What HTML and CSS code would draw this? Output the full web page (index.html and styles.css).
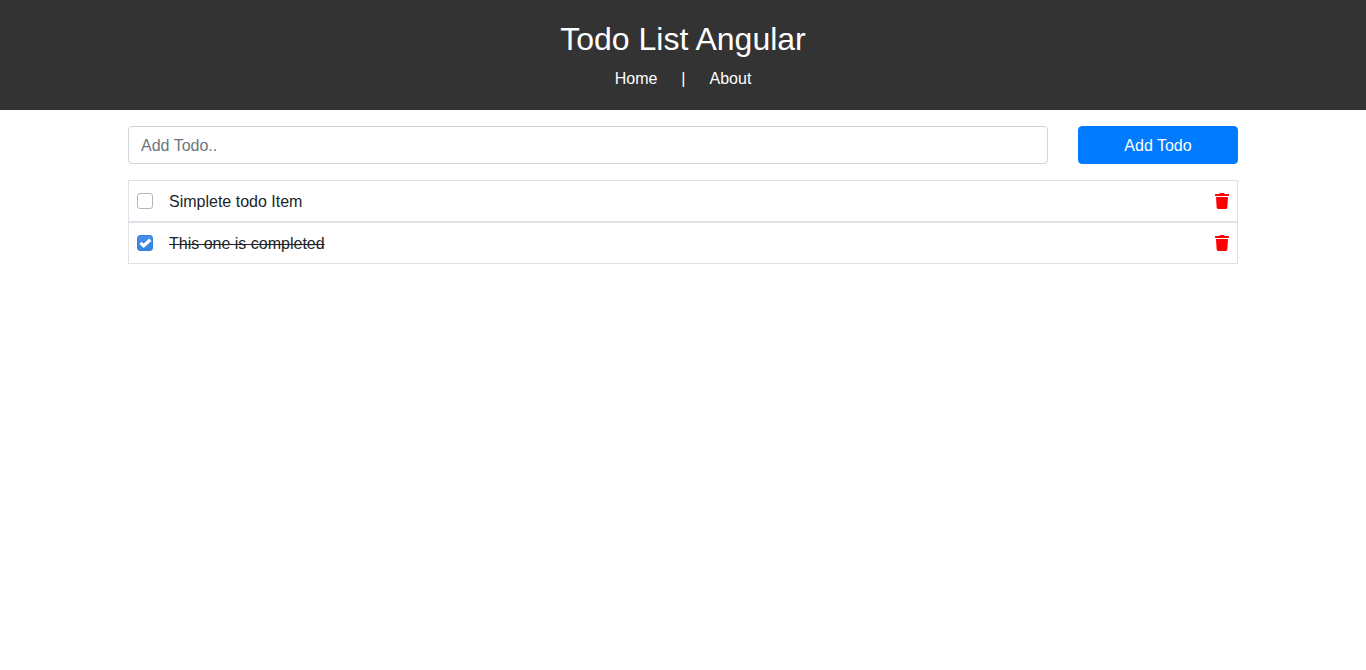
FILE: index.html
```html
<!DOCTYPE html>
<html lang="en">
<head>
  <meta charset="utf-8">
  <meta name="viewport" content="width=device-width, initial-scale=1">
  <title>Todo List Angular</title>
  <link rel="stylesheet" href="styles.css">
</head>
<body>
  <header class="header">
    <h1 class="header-title">Todo List Angular</h1>
    <nav class="header-nav">
      <a class="header-link" href="#home">Home</a>
      <span>|</span>
      <a class="header-link" href="#about">About</a>
    </nav>
  </header>
  <main class="container">
    <form class="add-form">
      <input class="add-input" type="text" name="title" placeholder="Add Todo.." aria-label="Add Todo">
      <button class="add-button" type="submit">Add Todo</button>
    </form>
    <ul class="todo-list">
      <li class="todo">
        <input class="todo-check" type="checkbox" id="todo-1">
        <label class="todo-label" for="todo-1">Simplete todo Item</label>
        <button class="todo-delete" type="button" aria-label="Delete Simplete todo Item">
          <svg class="trash" viewBox="0 0 448 512" aria-hidden="true"><path d="M432 32H312l-9.4-18.7A24 24 0 0 0 281.1 0H166.8a23.72 23.72 0 0 0-21.4 13.3L136 32H16A16 16 0 0 0 0 48v32a16 16 0 0 0 16 16h416a16 16 0 0 0 16-16V48a16 16 0 0 0-16-16zM53.2 467a48 48 0 0 0 47.9 45h245.8a48 48 0 0 0 47.9-45L416 128H32z"/></svg>
        </button>
      </li>
      <li class="todo todo-done">
        <input class="todo-check" type="checkbox" id="todo-2" checked>
        <label class="todo-label" for="todo-2">This one is completed</label>
        <button class="todo-delete" type="button" aria-label="Delete This one is completed">
          <svg class="trash" viewBox="0 0 448 512" aria-hidden="true"><path d="M432 32H312l-9.4-18.7A24 24 0 0 0 281.1 0H166.8a23.72 23.72 0 0 0-21.4 13.3L136 32H16A16 16 0 0 0 0 48v32a16 16 0 0 0 16 16h416a16 16 0 0 0 16-16V48a16 16 0 0 0-16-16zM53.2 467a48 48 0 0 0 47.9 45h245.8a48 48 0 0 0 47.9-45L416 128H32z"/></svg>
        </button>
      </li>
    </ul>
  </main>
</body>
</html>
```
FILE: styles.css
```css
*,
*::before,
*::after {
  box-sizing: border-box;
}

body {
  margin: 0;
  background: #fff;
  color: #212529;
  font-family: "Liberation Sans", Arial, sans-serif;
  font-size: 16px;
  line-height: 24px;
}

.header {
  padding: 20px 20px 18px;
  background: #333;
  color: #fff;
  text-align: center;
}

.header-title {
  margin: 0 0 8px;
  font-size: 32px;
  font-weight: 400;
  line-height: 38px;
}

.header-nav {
  display: flex;
  justify-content: center;
  gap: 24px;
  line-height: 26px;
}

.header-link {
  color: #fff;
  text-decoration: none;
}

.container {
  max-width: 1140px;
  margin: 0 auto;
  padding: 16px 15px;
}

.add-form {
  display: flex;
  gap: 30px;
  margin-bottom: 16px;
}

.add-input,
.add-button {
  height: 38px;
  padding: 7px 12px 5px;
  border: 1px solid #ced4da;
  border-radius: 4px;
  font: inherit;
}

.add-input {
  flex: 1;
  min-width: 0;
  background: #fff;
  color: #495057;
}

.add-input::placeholder {
  color: #6c757d;
  opacity: 1;
}

.add-button {
  flex: 0 0 160px;
  border-color: #007bff;
  background: #007bff;
  color: #fff;
  cursor: pointer;
}

.todo-list {
  margin: 0;
  padding: 0;
  list-style: none;
}

.todo {
  display: flex;
  align-items: center;
  padding: 8px;
  border: 1px solid #dee2e6;
}

.todo-check {
  appearance: none;
  width: 16px;
  height: 16px;
  margin: 0 16px 0 0;
  border: 1px solid #bdb5ad;
  border-radius: 3px;
  background: #fff;
}

.todo-check:checked {
  border-color: #3581e0;
  background: url("data:image/svg+xml,%3Csvg xmlns='http://www.w3.org/2000/svg' viewBox='0 0 16 16'%3E%3Cpath d='M3.5 7.8 6.7 10.8 13.3 4.8' fill='none' stroke='%23fff' stroke-width='3.2'/%3E%3C/svg%3E") center / 16px 16px no-repeat border-box, linear-gradient(#4a90e8, #3581e0) border-box;
}

.todo-label {
  flex: 1;
  padding-top: 2px;
  line-height: 22px;
}

.todo-done .todo-label {
  text-decoration: line-through;
}

.todo-delete {
  display: flex;
  padding: 0;
  border: 0;
  background: none;
  color: #f00;
  cursor: pointer;
}

.trash {
  width: 14px;
  height: 16px;
  fill: currentColor;
}
```
